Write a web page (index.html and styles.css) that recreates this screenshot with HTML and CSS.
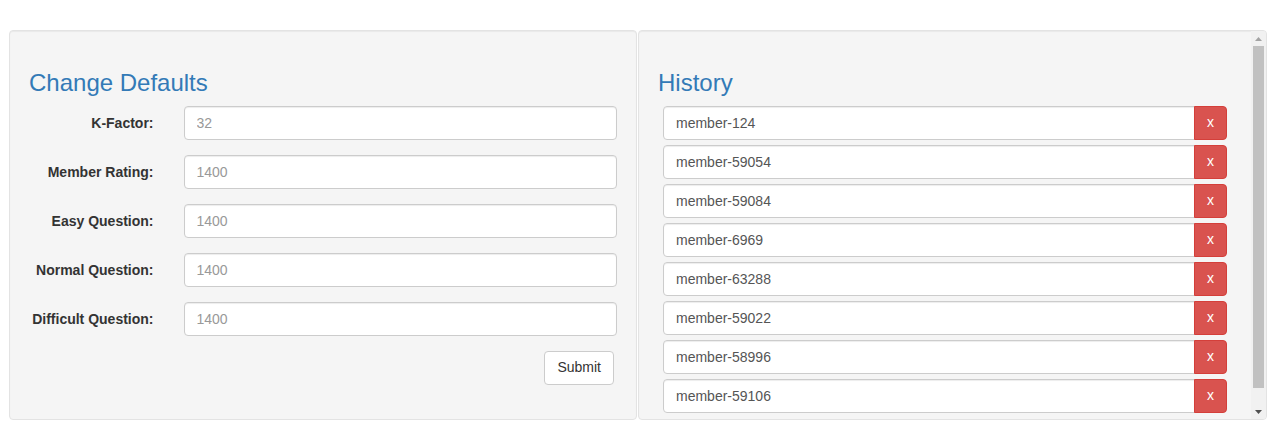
FILE: index.html
```html
<!DOCTYPE html>
<html>
<head>
<meta charset="utf-8">
<link rel="stylesheet" href="styles.css">
</head>
<body>
<div class="row">
  <div class="well">
    <h3 class="title">Change Defaults</h3>
    <form class="form">
      <div class="group"><label class="label">K-Factor:</label><div class="field"><input class="input" placeholder="32"></div></div>
      <div class="group"><label class="label">Member Rating:</label><div class="field"><input class="input" placeholder="1400"></div></div>
      <div class="group"><label class="label">Easy Question:</label><div class="field"><input class="input" placeholder="1400"></div></div>
      <div class="group"><label class="label">Normal Question:</label><div class="field"><input class="input" placeholder="1400"></div></div>
      <div class="group"><label class="label">Difficult Question:</label><div class="field"><input class="input" placeholder="1400"></div></div>
      <div class="actions"><button type="button" class="btn">Submit</button></div>
    </form>
  </div>
  <div class="well history">
    <div class="history-body">
      <h3 class="title">History</h3>
      <ul class="list">
        <li class="item"><input class="input item-input" value="member-124"><button type="button" class="del">x</button></li>
        <li class="item"><input class="input item-input" value="member-59054"><button type="button" class="del">x</button></li>
        <li class="item"><input class="input item-input" value="member-59084"><button type="button" class="del">x</button></li>
        <li class="item"><input class="input item-input" value="member-6969"><button type="button" class="del">x</button></li>
        <li class="item"><input class="input item-input" value="member-63288"><button type="button" class="del">x</button></li>
        <li class="item"><input class="input item-input" value="member-59022"><button type="button" class="del">x</button></li>
        <li class="item"><input class="input item-input" value="member-58996"><button type="button" class="del">x</button></li>
        <li class="item"><input class="input item-input" value="member-59106"><button type="button" class="del">x</button></li>
      </ul>
    </div>
    <div class="scrollbar" aria-hidden="true">
      <div class="sb-btn"><svg width="7" height="4" viewBox="0 0 7 4"><polygon points="0,4 7,4 3.5,0" fill="#a3a3a3"/></svg></div>
      <div class="sb-track"><div class="sb-thumb"></div></div>
      <div class="sb-btn"><svg width="7" height="4" viewBox="0 0 7 4"><polygon points="0,0 7,0 3.5,4" fill="#505050"/></svg></div>
    </div>
  </div>
</div>
</body>
</html>
```
FILE: styles.css
```css
* { box-sizing: border-box; }
html, body { margin: 0; padding: 0; background: #fff; }
body {
  font-family: "Liberation Sans", Arial, sans-serif;
  font-size: 14px;
  line-height: 1.42857;
  color: #333;
}
.row {
  display: flex;
  align-items: flex-start;
  padding: 30px 0 0 9px;
  gap: 1px;
}
.well {
  width: 628px;
  flex: none;
  background: #f5f5f5;
  border: 1px solid #e3e3e3;
  border-radius: 4px;
  box-shadow: inset 0 1px 1px rgba(0,0,0,.05);
  padding: 0 19px 19px;
}
.history {
  width: 629px;
  height: 390px;
  padding: 0;
  display: flex;
  overflow: hidden;
}
.history-body {
  flex: 1;
  min-width: 0;
  padding: 0 19px 19px;
  overflow: hidden;
}
.scrollbar {
  flex: none;
  width: 15px;
  display: flex;
  flex-direction: column;
  background: #f1f1f1;
}
.sb-btn {
  flex: none;
  height: 15px;
  display: flex;
  align-items: center;
  justify-content: center;
}
.sb-btn svg { display: block; }
.sb-track {
  flex: 1;
  padding: 0 2px;
}
.sb-thumb {
  height: 342px;
  background: #c1c1c1;
}
.title {
  margin: 39px 0 10px;
  font-size: 24px;
  font-weight: 500;
  line-height: 1.1;
  color: #337ab7;
}
.form { margin: 0; }
.group {
  display: grid;
  grid-template-columns: 25% 75%;
  margin: 0 -15px 15px;
}
.label {
  padding: 7px 15px 0;
  text-align: right;
  font-weight: 700;
  line-height: 20px;
}
.field { padding: 0 15px; }
.input {
  display: block;
  width: 100%;
  height: 34px;
  padding: 6px 12px;
  font-family: inherit;
  font-size: 14px;
  line-height: 1.42857;
  color: #555;
  background: #fff;
  border: 1px solid #ccc;
  border-radius: 4px;
  box-shadow: inset 0 1px 1px rgba(0,0,0,.075);
  outline: none;
}
.input::placeholder { color: #999; }
.actions {
  display: flex;
  justify-content: flex-end;
  padding-right: 3px;
  margin-bottom: 15px;
}
.btn {
  height: 34px;
  padding: 6px 12px;
  font-family: inherit;
  font-size: 14px;
  line-height: 1.42857;
  color: #333;
  background: #fff;
  border: 1px solid #ccc;
  border-radius: 4px;
}
.list {
  list-style: none;
  margin: 0;
  padding: 0 5px;
}
.item {
  display: flex;
  margin-bottom: 5px;
}
.item-input {
  flex: 1;
  min-width: 0;
  border-radius: 4px 0 0 4px;
}
.del {
  flex: none;
  width: 33px;
  height: 34px;
  margin-left: -1px;
  padding: 6px 0;
  font-family: inherit;
  font-size: 14px;
  line-height: 1.42857;
  color: #fff;
  background: #d9534f;
  border: 1px solid #d43f3a;
  border-radius: 0 4px 4px 0;
}
```
